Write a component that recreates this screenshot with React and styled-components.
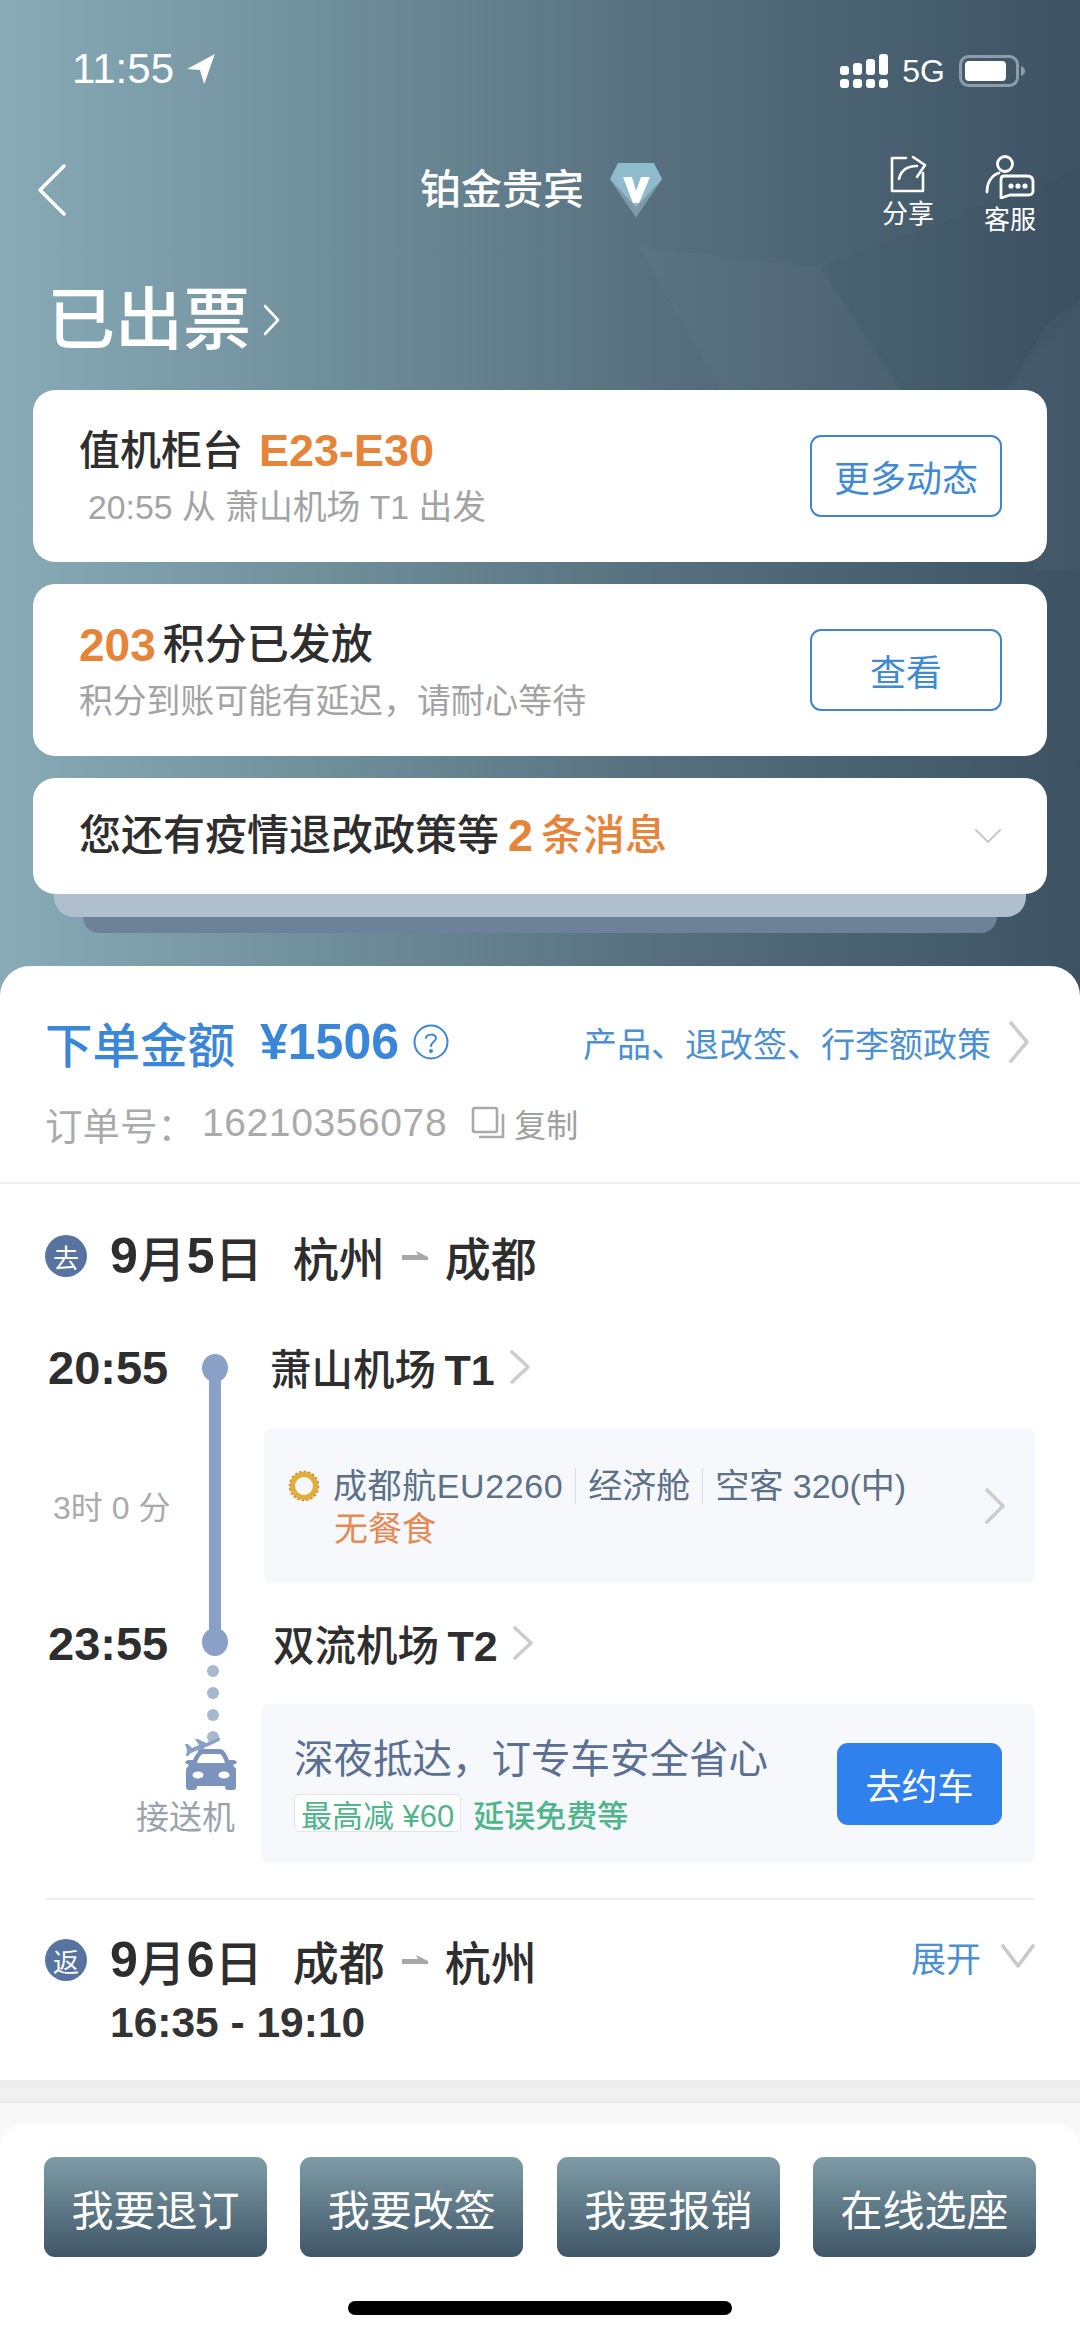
import React from 'react'
import styled, { createGlobalStyle } from 'styled-components'

const GlobalStyle = createGlobalStyle`
  html, body {
    margin: 0;
    padding: 0;
    background: #fff;
  }
  * { box-sizing: border-box; }
  body {
    font-family: "Liberation Sans", "Noto Sans CJK SC", sans-serif;
    color: #2e2e2e;
  }
`

const Page = styled.div`
  width: 1080px;
  height: 2337px;
  overflow: hidden;
  display: flex;
  flex-direction: column;
  background: #fff;
`

// Top part
const Hero = styled.header`
  position: relative;
  height: 996px;
  flex-shrink: 0;
  padding: 0 33px;
  background: linear-gradient(90deg, #88abb7 0%, #6f8f9b 30%, #566e7d 62%, #3d5364 100%);
`

const Facets = styled.svg`
  position: absolute;
  inset: 0;
  width: 1080px;
  height: 996px;
`

const StatusBar = styled.div`
  position: relative;
  height: 108px;
  display: flex;
  align-items: flex-end;
  justify-content: space-between;
  color: #fff;
  padding: 0 22px 17px 39px;
`

const Clock = styled.div`
  display: flex;
  align-items: center;
  gap: 12px;
  font-size: 42px;
  line-height: 44px;
  font-weight: 400;
`

const StatusRight = styled.div`
  display: flex;
  align-items: center;
  gap: 14px;
  font-size: 32px;
  line-height: 40px;
`

const NavBar = styled.nav`
  position: relative;
  height: 164px;
  display: flex;
  align-items: center;
  justify-content: space-between;
  color: #fff;
  padding-left: 5px;
`

const NavTitle = styled.div`
  position: absolute;
  left: 387px;
  top: 54px;
  display: flex;
  align-items: center;
  gap: 26px;
  font-size: 41px;
  line-height: 56px;
  font-weight: 500;
`

const NavActions = styled.div`
  display: flex;
  gap: 48px;
  margin-right: 10px;
  padding-top: 12px;
`

const NavAction = styled.div`
  width: 54px;
  display: flex;
  flex-direction: column;
  align-items: center;
  gap: 3px;
  font-size: 26px;
  line-height: 36px;
  white-space: nowrap;
`

const StatusTitle = styled.h1`
  position: relative;
  margin: 13px 0 0;
  height: 70px;
  padding-left: 14px;
  display: flex;
  align-items: center;
  gap: 12px;
  color: #fff;
  font-size: 68px;
  line-height: 70px;
  font-weight: 500;
`

const CardList = styled.div`
  position: relative;
  margin-top: 35px;
  display: flex;
  flex-direction: column;
  gap: 22px;
`

const Card = styled.section`
  position: relative;
  height: ${(p) => p.$height}px;
  padding: 0 45px 0 46px;
  display: flex;
  align-items: center;
  justify-content: space-between;
  background: #fff;
  border-radius: 22px;
`

const StackLayer = styled.div`
  position: relative;
  height: ${(p) => p.$height}px;
  margin: 0 ${(p) => p.$inset}px;
  background: ${(p) => p.$color};
  border-radius: 0 0 20px 20px;
`

const CardStack = styled.div`
  display: flex;
  flex-direction: column;
`

const CardTitle = styled.div`
  display: flex;
  align-items: center;
  font-size: ${(p) => p.$size || 41}px;
  line-height: 56px;
  font-weight: 500;
  color: #2e2e2e;
  white-space: nowrap;
`

const Accent = styled.span`
  margin: 0 ${(p) => p.$after || 0}px 0 ${(p) => p.$before || 0}px;
  color: #e6843a;
  font-size: ${(p) => p.$size || 'inherit'}${(p) => (p.$size ? 'px' : '')};
  font-weight: ${(p) => p.$weight || 700};
`

const CardSub = styled.div`
  margin-top: 6px;
  padding-left: ${(p) => p.$indent || 0}px;
  font-size: 33.8px;
  line-height: 44px;
  color: #a3a3a3;
  white-space: nowrap;
`

const OutlineButton = styled.div`
  width: 192px;
  height: 82px;
  display: flex;
  align-items: center;
  justify-content: center;
  border: 2.5px solid #3f85cf;
  border-radius: 11px;
  color: #3f8ad3;
  font-size: 36px;
`

// White sheet
const Sheet = styled.main`
  position: relative;
  margin-top: -30px;
  background: #fff;
  border-radius: 30px 30px 0 0;
`

const OrderInfo = styled.div`
  padding: 46px 45px 34px;
  border-bottom: 2px solid #eeeeee;
`

const PriceRow = styled.div`
  height: 60px;
  display: flex;
  align-items: center;
`

const PriceLabel = styled.span`
  font-size: 47.5px;
  font-weight: 500;
  color: #3a86d8;
`

const PriceValue = styled.span`
  margin-left: 25px;
  font-size: 50px;
  font-weight: 700;
  color: #3a86d8;
`

const HelpSlot = styled.span`
  display: flex;
  margin-left: 14px;
`

const PolicyLink = styled.div`
  margin-left: auto;
  display: flex;
  align-items: center;
  gap: 18px;
  font-size: 34px;
  color: #4a90d2;
  margin-right: 6px;
`

const OrderRow = styled.div`
  margin-top: 26px;
  height: 50px;
  display: flex;
  align-items: center;
  font-size: 37.5px;
  color: #aaaaaa;
`

const OrderNumber = styled.span`
  margin-left: 7px;
  font-size: 39px;
  letter-spacing: 0.6px;
`

const CopySlot = styled.span`
  display: flex;
  margin-left: 24px;
`

const CopyText = styled.span`
  margin-left: 7px;
  font-size: 32px;
  color: #a0a0a0;
`

const TripSection = styled.section`
  margin: 0 45px;
  padding: 42px 0 35px;
  border-bottom: 2px solid #eeeeee;
`

const TripHead = styled.div`
  height: 60px;
  display: flex;
  align-items: center;
`

const TripBadge = styled.span`
  width: 42px;
  height: 42px;
  flex-shrink: 0;
  border-radius: 50%;
  display: flex;
  align-items: center;
  justify-content: center;
  background: #56749f;
  color: #fff;
  font-size: 26px;
`

const TripTitle = styled.span`
  margin-left: 23px;
  display: flex;
  align-items: center;
  font-size: 48px;
  font-weight: 500;
  color: #2e2e2e;
  white-space: nowrap;
`

const BoldNum = styled.b`
  font-weight: 700;
  font-size: ${(p) => p.$size || 'inherit'}${(p) => (p.$size ? 'px' : '')};
  margin: 0 ${(p) => p.$space || 0}px 0 ${(p) => p.$lead || 0}px;
`

const Cities = styled.span`
  margin-left: 30px;
  display: flex;
  align-items: center;
  gap: 17px;
  font-size: 46px;
`

const Timeline = styled.div`
  margin-top: 59px;
  display: grid;
  grid-template-columns: 144px 52px 1fr;
`

const TimeLabel = styled.div`
  height: 44px;
  display: flex;
  align-items: center;
  padding-left: 3px;
  font-size: 47px;
  font-weight: 700;
  color: #2e2e2e;
`

const Rail = styled.div`
  grid-column: 2;
  grid-row: 1 / 4;
  padding: 9px 0;
  display: flex;
  flex-direction: column;
  align-items: center;
`

const RailDot = styled.span`
  width: 26px;
  height: 28px;
  flex-shrink: 0;
  border-radius: 50%;
  background: #8aa0c6;
`

const RailLine = styled.span`
  flex: 1;
  width: 12px;
  margin: -4px 0;
  background: #8aa0c6;
`

const Airport = styled.div`
  grid-column: 3;
  height: 44px;
  margin-left: ${(p) => p.$indent || 29}px;
  display: flex;
  align-items: center;
  gap: 15px;
  font-size: 41.5px;
  font-weight: 500;
  color: #2e2e2e;
  white-space: nowrap;
`

const Duration = styled.div`
  grid-column: 1;
  grid-row: 2;
  align-self: center;
  padding-left: 8px;
  font-size: 32px;
  color: #aaaaaa;
  white-space: nowrap;
`

const FlightBox = styled.div`
  grid-column: 3;
  grid-row: 2;
  height: 155px;
  margin: 39px 0 38px 23px;
  padding: 36px 30px 0 24px;
  position: relative;
  background: #f6f8fc;
  border-radius: 8px;
  font-size: 34px;
  color: #5c7187;
`

const FlightLine = styled.div`
  display: flex;
  align-items: center;
  height: 44px;
  white-space: nowrap;
`

const FlightPart = styled.span`
  margin-left: ${(p) => p.$gap || 0}px;
  padding-left: ${(p) => p.$gap || 0}px;
  border-left: ${(p) => (p.$gap ? '1px solid #d6dde6' : 'none')};
  letter-spacing: ${(p) => p.$spacing || 0}px;
  line-height: 36px;
`

const Meal = styled.div`
  margin: -1px 0 0 46px;
  line-height: 44px;
  color: #e68a55;
`

const BoxChevron = styled.span`
  position: absolute;
  right: 30px;
  top: 60px;
  display: flex;
`

const TransferCell = styled.div`
  grid-column: 1 / 3;
  grid-row: 4;
  display: flex;
  flex-direction: column;
  align-items: flex-end;
`

const TransferDot = styled.span`
  width: 12px;
  height: 12px;
  margin: 0 22px 10px 0;
  border-radius: 50%;
  background: #a7b8cf;
`

const TransferLabel = styled.div`
  margin: 5px 6px 0 0;
  font-size: 33px;
  line-height: 44px;
  color: #9aa3ad;
  white-space: nowrap;
`

const TransferBox = styled.div`
  grid-column: 3;
  grid-row: 4;
  height: 159px;
  margin: 39px 0 0 20px;
  padding: 0 33px;
  display: flex;
  align-items: center;
  justify-content: space-between;
  background: #f6f8fc;
  border-radius: 8px;
`

const TransferTitle = styled.div`
  font-size: 39.5px;
  line-height: 54px;
  color: #5a6f91;
  white-space: nowrap;
`

const PerkRow = styled.div`
  margin-top: 5px;
  display: flex;
  align-items: center;
  gap: 12px;
  font-size: 31px;
  color: #4fb58b;
  white-space: nowrap;
`

const PerkTag = styled.span`
  height: 38px;
  padding: 0 6px;
  display: flex;
  align-items: center;
  background: #fff;
  border: 1px solid #dfe7e6;
  border-radius: 5px;
`

const PerkText = styled.span`
  font-weight: 500;
`

const BookButton = styled.div`
  width: 165px;
  height: 82px;
  display: flex;
  align-items: center;
  justify-content: center;
  background: #2f81ee;
  border-radius: 11px;
  color: #fff;
  font-size: 36px;
`

const ReturnSection = styled.section`
  padding: 30px 45px 32px;
`

const ExpandToggle = styled.div`
  margin-left: auto;
  display: flex;
  align-items: center;
  gap: 20px;
  font-size: 35px;
  color: #4a90d2;
  transform: translateY(-4px);
`

const ReturnTimes = styled.div`
  margin: 8px 0 0 65px;
  height: 50px;
  display: flex;
  align-items: center;
  font-size: 42.5px;
  font-weight: 700;
  color: #333;
`

const GrayBand = styled.div`
  height: 26px;
  background: linear-gradient(180deg, #ececec 0%, #f2f2f2 70%, #e9e9e9 100%);
`

const BottomArea = styled.div`
  flex: 1;
  padding-top: 20px;
  background: #f8f8f8;
`

const ActionBar = styled.footer`
  height: 214px;
  padding: 34px 44px 0;
  background: #fff;
  border-radius: 26px 26px 0 0;
  display: flex;
  flex-direction: column;
  align-items: center;
`

const ActionRow = styled.div`
  width: 100%;
  display: grid;
  grid-template-columns: repeat(4, 223px);
  justify-content: space-between;
`

const ActionButton = styled.div`
  height: 100px;
  display: flex;
  align-items: center;
  justify-content: center;
  background: linear-gradient(180deg, #7e9ca7 0%, #3f5667 100%);
  border-radius: 11px;
  color: #fff;
  font-size: 42px;
`

const HomeBar = styled.div`
  width: 384px;
  height: 14px;
  margin-top: 44px;
  background: #000;
  border-radius: 7px;
`

// Icons
const Chevron = ({ width = 20, height = 40, color = '#cccccc', stroke = 3.6, dir = 'right' }) => {
  const points = dir === 'right'
    ? `2,2 ${width - 2},${height / 2} 2,${height - 2}`
    : dir === 'left'
      ? `${width - 2},2 2,${height / 2} ${width - 2},${height - 2}`
      : `2,2 ${width / 2},${height - 2} ${width - 2},2`
  return (
    <svg width={width} height={height} viewBox={`0 0 ${width} ${height}`} fill="none" style={{ flexShrink: 0 }}>
      <polyline points={points} stroke={color} strokeWidth={stroke} strokeLinecap="round" strokeLinejoin="round" />
    </svg>
  )
}

const LocationArrow = () => (
  <svg width="30" height="32" viewBox="0 0 28 30">
    <path d="M27 1 L1 15 L13 16 L17 29 Z" fill="#fff" />
  </svg>
)

const SignalIcon = () => (
  <svg width="48" height="34" viewBox="0 0 48 34" fill="#fff">
    <rect x="0" y="12" width="9" height="9" rx="3" />
    <rect x="13" y="9" width="9" height="12" rx="3" />
    <rect x="26" y="5" width="9" height="16" rx="3" />
    <rect x="39" y="0" width="9" height="21" rx="3" />
    <rect x="0" y="25" width="9" height="9" rx="3" />
    <rect x="13" y="25" width="9" height="9" rx="3" />
    <rect x="26" y="25" width="9" height="9" rx="3" />
    <rect x="39" y="25" width="9" height="9" rx="3" />
  </svg>
)

const BatteryIcon = () => (
  <svg width="66" height="32" viewBox="0 0 66 32">
    <rect x="1.5" y="1.5" width="57" height="29" rx="8" fill="none" stroke="#8b9cab" strokeWidth="3" />
    <rect x="6" y="6" width="41" height="20" rx="4" fill="#fff" />
    <path d="M62 11 C65 12 66 14 66 16 C66 18 65 20 62 21 Z" fill="#8b9cab" />
  </svg>
)

const ShareIcon = () => (
  <svg width="38" height="38" viewBox="0 0 38 38" fill="none" stroke="#fff" strokeWidth="2.6" strokeLinecap="round" strokeLinejoin="round">
    <path d="M17 3 H3 V36 H34 V18" />
    <path d="M10 24 C12 15 18 11 28 11" />
    <path d="M24 2 L36 10 L28 22" />
  </svg>
)

const ServiceIcon = () => (
  <svg width="50" height="44" viewBox="0 0 50 44" fill="none" stroke="#fff" strokeWidth="2.8" strokeLinecap="round" strokeLinejoin="round">
    <circle cx="20" cy="9" r="7.5" />
    <path d="M2 37 C2 27 7 20 14 18" />
    <path d="M19 21 H42 C46 21 48 23 48 27 V36 C48 39 46 40 43 40 H25 L16 43 V25 C16 23 17 21 19 21 Z" />
    <circle cx="26" cy="31" r="1.2" fill="#fff" />
    <circle cx="33" cy="31" r="1.2" fill="#fff" />
    <circle cx="40" cy="31" r="1.2" fill="#fff" />
  </svg>
)

const DiamondIcon = () => (
  <svg width="52" height="54" viewBox="0 0 52 54">
    <path d="M8 0 H44 L52 16 L26 54 L0 16 Z" fill="#8fbccd" />
    <path d="M0 16 L26 54 L52 16 L26 44 Z" fill="#7f9aa6" />
    <path d="M13 14 H22 L26 28 L31 14 H40 L29 40 H23 Z" fill="#fff" />
  </svg>
)

const HelpIcon = () => (
  <svg width="36" height="36" viewBox="0 0 36 36" fill="none" stroke="#3a86d8" strokeWidth="2" strokeLinecap="round">
    <circle cx="18" cy="18" r="16.5" />
    <path d="M13 14 C13 10 23 9 23 14 C23 18 18 18 18 22" />
    <circle cx="18" cy="27" r="1" fill="#3a86d8" />
  </svg>
)

const CopyIcon = () => (
  <svg width="36" height="34" viewBox="0 0 36 34" fill="none" stroke="#a9a9a9" strokeWidth="2.6">
    <rect x="2" y="2" width="24" height="24" rx="2" />
    <path d="M32 8 V31 H8" />
  </svg>
)

const RouteArrow = () => (
  <svg width="26" height="14" viewBox="0 0 26 14">
    <path d="M0 6 H16 L14 2 L26 8 V11 H0 Z" fill="#a8a8a8" />
  </svg>
)

const AirlineLogo = () => (
  <svg width="32" height="32" viewBox="0 0 32 32" fill="none" style={{ marginRight: 13, flexShrink: 0 }}>
    <circle cx="16" cy="16" r="11.5" stroke="#e2ad3a" strokeWidth="5" />
    <circle cx="16" cy="16" r="14.5" stroke="#c98e25" strokeWidth="1.6" strokeDasharray="2.5 2" />
  </svg>
)

const CarIcon = () => (
  <svg width="54" height="56" viewBox="0 0 54 56" style={{ marginRight: 3, marginTop: -18 }}>
    <path d="M34 3 C36 2 37 5 35 6 L20 13 L16 20 L13 20 L14 15 L7 18 L4 21 L2 21 L3 15 L1 9 L4 9 L8 13 L15 10 L11 4 L14 4 L22 8 Z" fill="#8aa0c6" />
    <path d="M19 14 H35 C39 14 42 17 45 25 L49 25 C52 25 53 27 53 28 L49 30 L52 34 V52 C52 54 51 55 49 55 H44 C42 55 41 54 41 51 H13 C13 54 12 55 10 55 H5 C3 55 2 54 2 52 V34 L5 30 L1 28 C1 27 2 25 5 25 L9 25 C11 20 14 16 19 14 Z M19 19 C16 20 14 24 13 28 H41 C40 24 38 19 35 19 Z" fill="#7c94bd" fillRule="evenodd" />
    <ellipse cx="14" cy="40" rx="5.5" ry="3.6" fill="#fff" />
    <ellipse cx="40" cy="40" rx="5.5" ry="3.6" fill="#fff" />
  </svg>
)

const buttons = ['我要退订', '我要改签', '我要报销', '在线选座']

const App = () => {
  return (
    <Page>
      <GlobalStyle />
      <Hero>
        <Facets viewBox="0 0 1080 996">
          <polygon points="640,247 820,267 902,390 725,400" fill="#fff" opacity="0.025" />
          <polygon points="820,267 1080,170 1080,300 1000,400 905,400" fill="#000" opacity="0.02" />
          <polygon points="1050,320 1080,300 1080,570 1035,570 1000,400" fill="#fff" opacity="0.025" />
        </Facets>

        <StatusBar>
          <Clock>
            11:55
            <LocationArrow />
          </Clock>
          <StatusRight>
            <SignalIcon />
            5G
            <BatteryIcon />
          </StatusRight>
        </StatusBar>

        <NavBar>
          <Chevron dir="left" width={28} height={52} color="#fff" stroke={3.5} />
          <NavTitle>
            铂金贵宾
            <DiamondIcon />
          </NavTitle>
          <NavActions>
            <NavAction>
              <ShareIcon />
              分享
            </NavAction>
            <NavAction>
              <ServiceIcon />
              客服
            </NavAction>
          </NavActions>
        </NavBar>

        <StatusTitle>
          已出票
          <Chevron width={17} height={32} color="#fff" stroke={2.6} />
        </StatusTitle>

        <CardList>
          <Card $height={172}>
            <div>
              <CardTitle>
                值机柜台
                <Accent $before={16} $size={45}>E23-E30</Accent>
              </CardTitle>
              <CardSub $indent={9}>20:55 从 萧山机场 T1 出发</CardSub>
            </div>
            <OutlineButton>更多动态</OutlineButton>
          </Card>
          <Card $height={172}>
            <div>
              <CardTitle $size={42}>
                <Accent $after={7} $size={46}>203</Accent>
                积分已发放
              </CardTitle>
              <CardSub>积分到账可能有延迟，请耐心等待</CardSub>
            </div>
            <OutlineButton>查看</OutlineButton>
          </Card>
          <CardStack>
            <Card $height={116}>
              <CardTitle $size={42}>
                您还有疫情退改政策等
                <Accent $before={9} $size={45}>2</Accent>
                <Accent $before={8} $weight={500}>条消息</Accent>
              </CardTitle>
              <Chevron dir="down" width={28} height={16} color="#c8c8c8" stroke={2} />
            </Card>
            <StackLayer $height={23} $inset={21} $color="#b0bfcd" />
            <StackLayer $height={16} $inset={50} $color="#6d8298" />
          </CardStack>
        </CardList>
      </Hero>

      <Sheet>
        <OrderInfo>
          <PriceRow>
            <PriceLabel>下单金额</PriceLabel>
            <PriceValue>¥1506</PriceValue>
            <HelpSlot><HelpIcon /></HelpSlot>
            <PolicyLink>
              产品、退改签、行李额政策
              <Chevron width={20} height={42} />
            </PolicyLink>
          </PriceRow>
          <OrderRow>
            订单号：
            <OrderNumber>16210356078</OrderNumber>
            <CopySlot><CopyIcon /></CopySlot>
            <CopyText>复制</CopyText>
          </OrderRow>
        </OrderInfo>

        <TripSection>
          <TripHead>
            <TripBadge>去</TripBadge>
            <TripTitle>
              <BoldNum $size={50}>9</BoldNum>月<BoldNum $size={50} $lead={1}>5</BoldNum>日
              <Cities>杭州 <RouteArrow /> 成都</Cities>
            </TripTitle>
          </TripHead>

          <Timeline>
            <TimeLabel>20:55</TimeLabel>
            <Rail>
              <RailDot />
              <RailLine />
              <RailDot />
            </Rail>
            <Airport>
              <span>萧山机场 <BoldNum $size={43} $lead={-3}>T1</BoldNum></span>
              <Chevron width={20} height={34} />
            </Airport>

            <Duration>3时 0 分</Duration>
            <FlightBox>
              <FlightLine>
                <AirlineLogo />
                <FlightPart $spacing={0.6}>成都航EU2260</FlightPart>
                <FlightPart $gap={12}>经济舱</FlightPart>
                <FlightPart $gap={12}>空客 320(中)</FlightPart>
              </FlightLine>
              <Meal>无餐食</Meal>
              <BoxChevron><Chevron width={20} height={36} /></BoxChevron>
            </FlightBox>

            <TimeLabel>23:55</TimeLabel>
            <Airport $indent={32}>
              <span>双流机场 <BoldNum $size={43} $lead={-3}>T2</BoldNum></span>
              <Chevron width={20} height={34} />
            </Airport>

            <TransferCell>
              <TransferDot />
              <TransferDot />
              <TransferDot />
              <TransferDot />
              <CarIcon />
              <TransferLabel>接送机</TransferLabel>
            </TransferCell>
            <TransferBox>
              <div>
                <TransferTitle>深夜抵达，订专车安全省心</TransferTitle>
                <PerkRow>
                  <PerkTag>最高减 ¥60</PerkTag>
                  <PerkText>延误免费等</PerkText>
                </PerkRow>
              </div>
              <BookButton>去约车</BookButton>
            </TransferBox>
          </Timeline>
        </TripSection>

        <ReturnSection>
          <TripHead>
            <TripBadge>返</TripBadge>
            <TripTitle>
              <BoldNum $size={50}>9</BoldNum>月<BoldNum $size={50} $lead={1}>6</BoldNum>日
              <Cities>成都 <RouteArrow /> 杭州</Cities>
            </TripTitle>
            <ExpandToggle>
              展开
              <Chevron dir="down" width={34} height={24} color="#c9c9c9" />
            </ExpandToggle>
          </TripHead>
          <ReturnTimes>16:35 - 19:10</ReturnTimes>
        </ReturnSection>
      </Sheet>

      <GrayBand />
      <BottomArea>
        <ActionBar>
          <ActionRow>
            {buttons.map((label) => (
              <ActionButton key={label}>{label}</ActionButton>
            ))}
          </ActionRow>
          <HomeBar />
        </ActionBar>
      </BottomArea>
    </Page>
  )
}

export default App
